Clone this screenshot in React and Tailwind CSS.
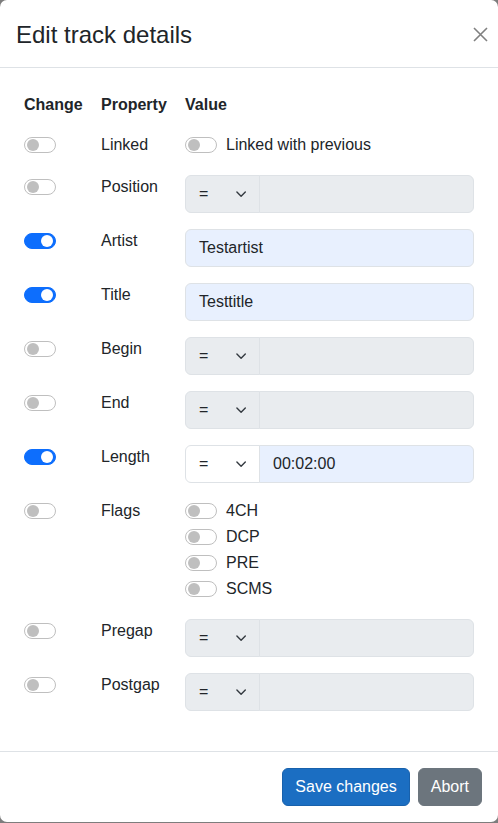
import React from 'react';

const font = { fontFamily: '"Liberation Sans", Arial, sans-serif' };

function Switch({ on }) {
  return on ? (
    <span className="relative block w-8 h-4 rounded-full bg-[#0d6efd] border border-[#0d6efd]">
      <span className="absolute right-[2px] top-[1px] w-3 h-3 rounded-full bg-white" />
    </span>
  ) : (
    <span className="relative block w-8 h-4 rounded-full bg-white border border-[#bfbfbf]">
      <span className="absolute left-[2px] top-[1px] w-3 h-3 rounded-full bg-[#bfbfbf]" />
    </span>
  );
}

function Chevron() {
  return (
    <svg width="16" height="12" viewBox="0 2 16 12" fill="none">
      <path d="m2 5 6 6 6-6" stroke="#343a40" strokeWidth="2" strokeLinecap="round" strokeLinejoin="round" transform="translate(2.5 2.5) scale(0.7)" />
    </svg>
  );
}

function OpInput({ value, active }) {
  return (
    <div className="flex h-[38px]">
      <div
        className={`w-[75px] shrink-0 flex items-center justify-between pl-[13px] pr-[10px] border border-[#dee2e6] rounded-l-[6px] ${
          active ? 'bg-white' : 'bg-[#e9ecef]'
        }`}
      >
        <span>=</span>
        <Chevron />
      </div>
      <div
        className={`flex-1 flex items-center px-[13px] -ml-px border border-[#dee2e6] rounded-r-[6px] ${
          active ? 'bg-[#e8f0fe]' : 'bg-[#e9ecef]'
        }`}
      >
        {value}
      </div>
    </div>
  );
}

function TextInput({ value }) {
  return (
    <div className="h-[38px] flex items-center px-[13px] border border-[#dee2e6] rounded-[6px] bg-[#e8f0fe]">
      {value}
    </div>
  );
}

function Check({ label, on }) {
  return (
    <div className="flex items-center h-6 mb-[2px]">
      <Switch on={on} />
      <span className="ml-[9px]">{label}</span>
    </div>
  );
}

const rows = [
  { name: 'Linked', type: 'linked' },
  { name: 'Position', type: 'op' },
  { name: 'Artist', type: 'text', value: 'Testartist', on: true },
  { name: 'Title', type: 'text', value: 'Testtitle', on: true },
  { name: 'Begin', type: 'op' },
  { name: 'End', type: 'op' },
  { name: 'Length', type: 'op', value: '00:02:00', on: true },
  { name: 'Flags', type: 'flags' },
  { name: 'Pregap', type: 'op' },
  { name: 'Postgap', type: 'op' },
];

export default function App() {
  return (
    <div className="min-h-screen bg-[#7d7d7d]" style={font}>
      <div className="bg-white rounded-[7px] h-[822px] flex flex-col text-[16px] leading-6 text-[#212529]">
        <div className="h-[68px] shrink-0 flex items-center justify-between pl-4 pr-[9px] border-b border-[#dee2e6]">
          <h4 className="text-[24px] leading-[34px] mt-[3px]">Edit track details</h4>
          <svg width="15" height="15" viewBox="0 0 15 15" className="mt-[2px] mr-px">
            <path d="M1 1l13 13M14 1L1 14" stroke="#808080" strokeWidth="1.6" />
          </svg>
        </div>

        <div className="flex-1 px-4 pt-[17px]">
          <div className="flex font-bold py-2">
            <div className="w-[77px] pl-2">Change</div>
            <div className="w-[84px] pl-2">Property</div>
            <div className="flex-1 pl-2">Value</div>
          </div>
          {rows.map(row => (
            <div key={row.name} className={`flex py-2 ${row.type === 'linked' ? 'h-[42px]' : ''}`}>
              <div className="w-[77px] pl-2 pt-1">
                <Switch on={row.on} />
              </div>
              <div className="w-[84px] pl-2">{row.name}</div>
              <div className="flex-1 px-2">
                {row.type === 'linked' && <Check label="Linked with previous" />}
                {row.type === 'op' && <OpInput value={row.value} active={row.on} />}
                {row.type === 'text' && <TextInput value={row.value} />}
                {row.type === 'flags' && (
                  <div>
                    <Check label="4CH" />
                    <Check label="DCP" />
                    <Check label="PRE" />
                    <Check label="SCMS" />
                  </div>
                )}
              </div>
            </div>
          ))}
        </div>

        <div className="shrink-0 border-t border-[#dee2e6] flex justify-end gap-2 px-4 py-4">
          <button className="h-[38px] px-3 rounded-[6px] bg-[#1b6ec2] border border-[#1861ac] text-white">
            Save changes
          </button>
          <button className="h-[38px] px-3 rounded-[6px] bg-[#6c757d] border border-[#6c757d] text-white">
            Abort
          </button>
        </div>
      </div>
    </div>
  );
}
